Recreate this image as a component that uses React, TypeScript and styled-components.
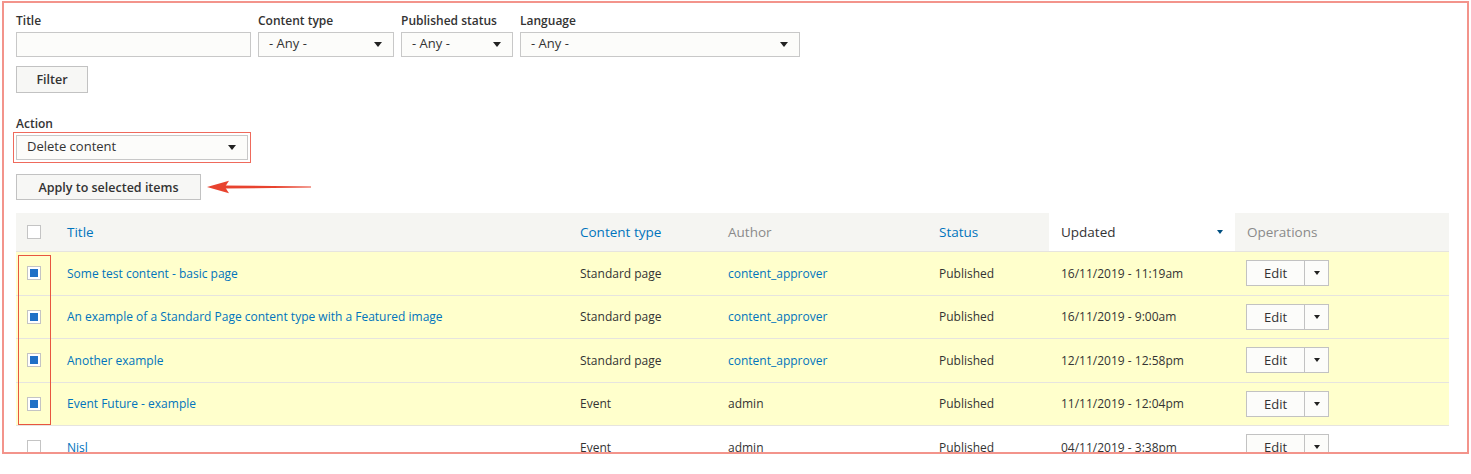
import React from 'react';
import styled, { createGlobalStyle } from 'styled-components';

const GlobalStyle = createGlobalStyle`
  body {
    margin: 0;
    background: #ffffff;
    font-family: "Open Sans", "Liberation Sans", sans-serif;
    color: #333333;
  }
`;

const Frame = styled.div`
  margin: 1px 0 0 2px;
  width: 1467px;
  height: 453px;
  box-sizing: border-box;
  border: 2px solid #f3948b;
  overflow: hidden;
  padding: 9px 0 0 12px;
`;

const FilterRow = styled.div`
  display: flex;
  gap: 7px;
`;

const Field = styled.div<{ $width: number }>`
  display: flex;
  flex-direction: column;
  width: ${(p) => p.$width}px;
`;

const Label = styled.label`
  font-size: 12px;
  font-weight: 600;
  line-height: 18px;
  margin-bottom: 2px;
  color: #333;
`;

const TextInput = styled.div`
  height: 25px;
  box-sizing: border-box;
  border: 1px solid #c8c8c8;
  background: #fcfcfa;
`;

const Select = styled.div<{ $width?: number; $highlight?: boolean }>`
  height: 25px;
  box-sizing: border-box;
  width: ${(p) => (p.$width ? `${p.$width}px` : '100%')};
  border: 1px solid #c8c8c8;
  background: #fcfcfa;
  display: flex;
  align-items: center;
  justify-content: space-between;
  padding: 0 11px 3px 10px;
  font-size: 13px;
  color: #333;
  ${(p) => p.$highlight && 'outline: 1.5px solid #ef6a5c; outline-offset: 2px;'}
`;

const Caret = styled.span<{ $size?: number; $color?: string }>`
  width: 0;
  height: 0;
  margin-top: ${(p) => (p.$size ? 0 : 3)}px;
  border-left: ${(p) => (p.$size ?? 8) / 2}px solid transparent;
  border-right: ${(p) => (p.$size ?? 8) / 2}px solid transparent;
  border-top: ${(p) => ((p.$size ?? 8) * 0.65).toFixed(1)}px solid ${(p) => p.$color ?? '#222'};
`;

const Button = styled.button<{ $width: number; $height: number }>`
  width: ${(p) => p.$width}px;
  height: ${(p) => p.$height}px;
  border: 1px solid #c2c2c2;
  background: #f7f7f5;
  font-family: "Open Sans", "Liberation Sans", sans-serif;
  font-size: 12.5px;
  font-weight: 600;
  color: #333;
  padding: 0;
`;

const FilterButton = styled(Button)`
  margin-top: 9px;
`;

const ActionBlock = styled.div`
  margin-top: 22px;
  display: flex;
  flex-direction: column;
  align-items: flex-start;
`;

const ApplyRow = styled.div`
  margin-top: 14px;
  display: flex;
  align-items: center;
  gap: 6px;
`;

const TableWrap = styled.div`
  position: relative;
  margin-top: 13px;
  width: 1433px;
`;

const Table = styled.table`
  border-collapse: collapse;
  width: 1433px;
  table-layout: fixed;
`;

const Th = styled.th<{ $active?: boolean; $muted?: boolean }>`
  height: 38px;
  padding: 0 12px;
  text-align: left;
  font-size: 13.5px;
  font-weight: 400;
  background: ${(p) => (p.$active ? '#ffffff' : '#f5f5f2')};
  color: ${(p) => (p.$active ? '#333' : p.$muted ? '#8a8a8a' : '#0074bd')};
  border-bottom: 1px solid #e6e4df;
`;

const ThInner = styled.div`
  display: flex;
  align-items: center;
  justify-content: space-between;
`;

const Tr = styled.tr<{ $selected?: boolean }>`
  background: ${(p) => (p.$selected ? '#ffffcc' : '#ffffff')};
`;

const Td = styled.td`
  height: 43.5px;
  box-sizing: border-box;
  padding: 0 12px;
  font-size: 12px;
  color: #333;
  border-bottom: 1px solid #e6e4df;
  white-space: nowrap;
`;

const CheckCell = styled(Td)`
  padding: 0 0 0 11px;
`;

const CheckHead = styled(Th)`
  padding: 0 0 0 11px;
`;

const Link = styled.a`
  color: #0074bd;
  text-decoration: none;
`;

const Checkbox = styled.span<{ $checked?: boolean }>`
  display: flex;
  align-items: center;
  justify-content: center;
  width: 14px;
  height: 14px;
  box-sizing: border-box;
  border: 1px solid #c4c4c4;
  background: #fff;
  &::after {
    content: '';
    display: ${(p) => (p.$checked ? 'block' : 'none')};
    width: 8px;
    height: 8px;
    background: #1f70c6;
  }
`;

const SplitButton = styled.div`
  display: inline-flex;
  height: 26px;
  box-sizing: border-box;
  border: 1px solid #c2c2c2;
  background: #fcfcfa;
  margin-left: -1px;
`;

const SplitMain = styled.span`
  width: 57px;
  display: flex;
  align-items: center;
  justify-content: center;
  font-size: 13px;
  color: #333;
  border-right: 1px solid #c2c2c2;
`;

const SplitToggle = styled.span`
  width: 23px;
  display: flex;
  align-items: center;
  justify-content: center;
`;

const ColumnMark = styled.div`
  position: absolute;
  left: 2px;
  top: 42px;
  width: 33px;
  height: 170px;
  box-sizing: border-box;
  border: 1px solid #e8553f;
  pointer-events: none;
`;

const Arrow = () => (
  <svg width="104" height="14" viewBox="0 0 104 14">
    <path d="M0 7 L22 0.8 L18 7 L22 13.2 Z" fill="#e8432f" />
    <path d="M17 5.4 L104 6.4 L104 7.4 L17 8.6 Z" fill="#e8432f" />
  </svg>
);

type Row = {
  title: string;
  type: string;
  author: string;
  authorLink: boolean;
  updated: string;
  selected: boolean;
};

const rows: Row[] = [
  { title: 'Some test content - basic page', type: 'Standard page', author: 'content_approver', authorLink: true, updated: '16/11/2019 - 11:19am', selected: true },
  { title: 'An example of a Standard Page content type with a Featured image', type: 'Standard page', author: 'content_approver', authorLink: true, updated: '16/11/2019 - 9:00am', selected: true },
  { title: 'Another example', type: 'Standard page', author: 'content_approver', authorLink: true, updated: '12/11/2019 - 12:58pm', selected: true },
  { title: 'Event Future - example', type: 'Event', author: 'admin', authorLink: false, updated: '11/11/2019 - 12:04pm', selected: true },
  { title: 'Nisl', type: 'Event', author: 'admin', authorLink: false, updated: '04/11/2019 - 3:38pm', selected: false },
];

const widths = [39, 513, 148, 211, 122, 186, 214];

export default function App() {
  return (
    <>
      <GlobalStyle />
      <Frame>
        <FilterRow>
          <Field $width={235}>
            <Label>Title</Label>
            <TextInput />
          </Field>
          <Field $width={136}>
            <Label>Content type</Label>
            <Select>
              - Any -<Caret />
            </Select>
          </Field>
          <Field $width={112}>
            <Label>Published status</Label>
            <Select>
              - Any -<Caret />
            </Select>
          </Field>
          <Field $width={280}>
            <Label>Language</Label>
            <Select>
              - Any -<Caret />
            </Select>
          </Field>
        </FilterRow>
        <FilterButton $width={72} $height={27}>Filter</FilterButton>

        <ActionBlock>
          <Label>Action</Label>
          <Select $width={232} $highlight>
            Delete content<Caret />
          </Select>
          <ApplyRow>
            <Button $width={185} $height={26}>Apply to selected items</Button>
            <Arrow />
          </ApplyRow>
        </ActionBlock>

        <TableWrap>
          <Table>
            <colgroup>
              {widths.map((w, i) => (
                <col key={i} style={{ width: w }} />
              ))}
            </colgroup>
            <thead>
              <tr>
                <CheckHead>
                  <Checkbox />
                </CheckHead>
                <Th>Title</Th>
                <Th>Content type</Th>
                <Th $muted>Author</Th>
                <Th>Status</Th>
                <Th $active>
                  <ThInner>
                    Updated
                    <Caret $size={7} $color="#004f80" />
                  </ThInner>
                </Th>
                <Th $muted>Operations</Th>
              </tr>
            </thead>
            <tbody>
              {rows.map((r) => (
                <Tr key={r.title} $selected={r.selected}>
                  <CheckCell>
                    <Checkbox $checked={r.selected} />
                  </CheckCell>
                  <Td>
                    <Link>{r.title}</Link>
                  </Td>
                  <Td>{r.type}</Td>
                  <Td>{r.authorLink ? <Link>{r.author}</Link> : r.author}</Td>
                  <Td>Published</Td>
                  <Td>{r.updated}</Td>
                  <Td>
                    <SplitButton>
                      <SplitMain>Edit</SplitMain>
                      <SplitToggle>
                        <Caret $size={7} />
                      </SplitToggle>
                    </SplitButton>
                  </Td>
                </Tr>
              ))}
            </tbody>
          </Table>
          <ColumnMark />
        </TableWrap>
      </Frame>
    </>
  );
}
